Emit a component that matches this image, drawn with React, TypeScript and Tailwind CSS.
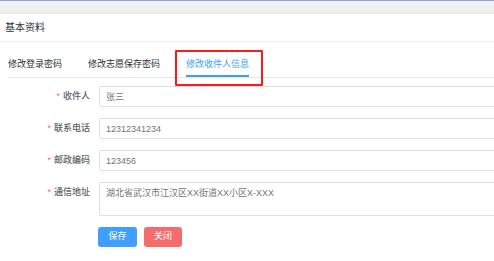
import React from "react";

const font = { fontFamily: '"Liberation Sans", "Noto Sans CJK SC", sans-serif' };

const tabs = ["修改登录密码", "修改志愿保存密码", "修改收件人信息"];

function Field({ label, children }: { label: string; children: React.ReactNode }) {
  return (
    <div className="flex items-start mb-[11px]">
      <label className="w-[99px] shrink-0 pr-[9px] text-right text-[9px] leading-[21px] text-[#606266] font-medium">
        <span className="text-[#f56c6c] mr-[3px]">*</span>
        {label}
      </label>
      {children}
    </div>
  );
}

const inputCls =
  "w-[420px] shrink-0 h-[21px] border border-[#dcdfe6] rounded-[2px] px-[6px] text-[9px] text-[#737579] outline-none";

export default function App() {
  const active = 2;
  return (
    <div className="w-[494px] h-[261px] overflow-hidden bg-white" style={font}>
      <div className="h-px bg-[#8ba3ee]" />
      <div className="h-[13px] bg-gradient-to-b from-[#f4f4f4] to-[#ececec]" />

      <div className="bg-white">
        <div className="h-[28px] flex items-center pl-[5px] border-b border-[#ebeef5] text-[10px] text-[#303133]">
          基本资料
        </div>

        <div className="pl-[8px] pt-[11px]">
          <div className="flex gap-[26px] border-b border-[#e4e7ed]">
            {tabs.map((t, i) => (
              <div
                key={t}
                className={`relative h-[24px] flex items-center text-[9px] ${
                  i === active ? "text-[#409eff]" : "text-[#303133]"
                }`}
              >
                {t}
                {i === active && (
                  <>
                    <div className="absolute left-0 right-0 bottom-0 h-[2px] bg-[#409eff]" />
                    <div className="absolute -left-[11px] -top-[3px] w-[88px] h-[36px] border-2 border-[#ff1a1a] rounded-[1px]" />
                  </>
                )}
              </div>
            ))}
          </div>
        </div>

        <div className="pt-[8px]">
          <Field label="收件人">
            <input readOnly value="张三" className={inputCls} />
          </Field>
          <Field label="联系电话">
            <input readOnly value="12312341234" className={inputCls} />
          </Field>
          <Field label="邮政编码">
            <input readOnly value="123456" className={inputCls} />
          </Field>
          <Field label="通信地址">
            <textarea
              readOnly
              value="湖北省武汉市江汉区XX街道XX小区X-XXX"
              className="w-[420px] shrink-0 h-[34px] border border-[#dcdfe6] rounded-[2px] px-[6px] py-[3px] text-[9px] leading-[14px] text-[#737579] outline-none resize-none"
            />
          </Field>

          <div className="flex gap-[7px] pl-[98px] mt-[1px]">
            <button className="w-[39px] h-[20px] rounded-[3px] bg-[#409eff] text-white text-[9px]">保存</button>
            <button className="w-[38px] h-[20px] rounded-[3px] bg-[#f56c6c] text-white text-[9px]">关闭</button>
          </div>
        </div>
      </div>
    </div>
  );
}
